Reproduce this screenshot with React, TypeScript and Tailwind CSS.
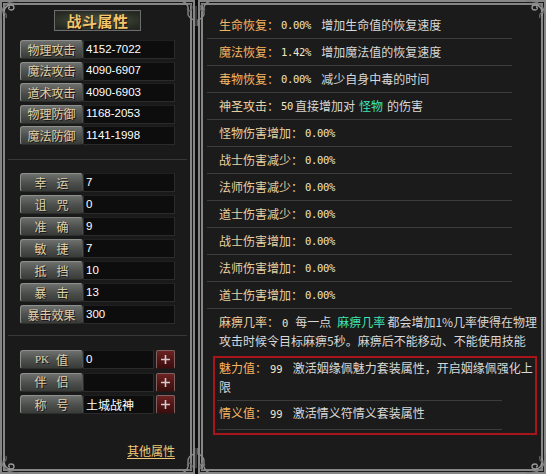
import React from "react";

const CJK = "font-['Noto_Sans_CJK_SC','Noto_Sans',sans-serif]";
const MONO = "font-['DejaVu_Sans_Mono',monospace]";

type Stat = { label: string[]; value: string; plus?: boolean };

const group1: Stat[] = [
  { label: ["物理攻击"], value: "4152-7022" },
  { label: ["魔法攻击"], value: "4090-6907" },
  { label: ["道术攻击"], value: "4090-6903" },
  { label: ["物理防御"], value: "1168-2053" },
  { label: ["魔法防御"], value: "1141-1998" },
];

const group2: Stat[] = [
  { label: ["幸", "运"], value: "7" },
  { label: ["诅", "咒"], value: "0" },
  { label: ["准", "确"], value: "9" },
  { label: ["敏", "捷"], value: "7" },
  { label: ["抵", "挡"], value: "10" },
  { label: ["暴", "击"], value: "13" },
  { label: ["暴击效果"], value: "300" },
];

const group3: Stat[] = [
  { label: ["PK", "值"], value: "0", plus: true },
  { label: ["伴", "侣"], value: "", plus: true },
  { label: ["称", "号"], value: "土城战神", plus: true },
];

type Row = { label: string; value: string; hot?: boolean; desc?: React.ReactNode };

const rows: Row[] = [
  { label: "生命恢复", value: "0.00%", hot: true, desc: "增加生命值的恢复速度" },
  { label: "魔法恢复", value: "1.42%", hot: true, desc: "增加魔法值的恢复速度" },
  { label: "毒物恢复", value: "0.00%", hot: true, desc: "减少自身中毒的时间" },
  {
    label: "神圣攻击",
    value: "50",
    desc: (
      <span className="ml-[-8px]">
        直接增加对<span className="ml-[4px] text-[#3ee6b8]">怪物</span>
        <span className="ml-[4px]">的伤害</span>
      </span>
    ),
  },
  { label: "怪物伤害增加", value: "0.00%" },
  { label: "战士伤害减少", value: "0.00%" },
  { label: "法师伤害减少", value: "0.00%" },
  { label: "道士伤害减少", value: "0.00%" },
  { label: "战士伤害增加", value: "0.00%" },
  { label: "法师伤害增加", value: "0.00%" },
  { label: "道士伤害增加", value: "0.00%" },
];

function Label({ parts }: { parts: string[] }) {
  const gap = parts[0] === "PK" ? "gap-[7px]" : "gap-[10px]";
  return (
    <div
      className={`w-[63px] h-full shrink-0 rounded-[3px] border border-[#8e908e] border-b-[#2c2e2c] border-r-[#4e504e] bg-linear-to-b from-[#6e706e] via-[#4f514f] to-[#393b39] flex items-center justify-center ${gap} text-[12px] leading-none text-[#e0cfa6] [text-shadow:1px_1px_0_#161616]`}
    >
      {parts.map((p) => (
        <span key={p} className={p === "PK" ? "font-['Liberation_Serif',serif] text-[11px]" : ""}>
          {p}
        </span>
      ))}
    </div>
  );
}

function StatRow({ s }: { s: Stat }) {
  const isDigits = /^[0-9-]*$/.test(s.value);
  return (
    <div className="flex h-[19px] items-stretch">
      <Label parts={s.label} />
      <div
        className={`h-full bg-[#0d0d0d] border border-[#2b2b2b] border-t-[#202020] flex items-center pl-[2px] text-white leading-none ${
          s.plus ? "w-[71px]" : "flex-1"
        } ${isDigits ? "font-['Liberation_Sans',sans-serif] text-[11.5px]" : "text-[12px]"}`}
      >
        {s.value}
      </div>
      {s.plus && (
        <div className="ml-[2px] w-[19px] h-full rounded-[2px] border border-[#7e6262] border-b-[#2a1414] bg-linear-to-b from-[#6e2222] via-[#521616] to-[#3a0e0e] flex items-center justify-center">
          <svg width="11" height="11" viewBox="0 0 11 11">
            <path d="M5.5 1v9M1 5.5h9" stroke="#d6caca" strokeWidth="1.6" />
          </svg>
        </div>
      )}
    </div>
  );
}

function Knot({ flip = "" }: { flip?: string }) {
  return (
    <svg width="20" height="20" viewBox="0 0 20 20" fill="none" className={flip}>
      <path d="M1 19 C1 7 5 1 19 1" stroke="#7e7e7e" strokeWidth="1.4" />
      <path d="M4 16 C3 9 6 5 11 5 C15 5 15 10 11 10 C8 10 8 7 10 7" stroke="#9a9a9a" strokeWidth="1.3" />
      <path d="M2 12 C6 12 7 15 6 18" stroke="#6a6a6a" strokeWidth="1.2" />
    </svg>
  );
}

function CenterOrn({ flip = "" }: { flip?: string }) {
  return (
    <svg width="34" height="26" viewBox="0 0 34 26" fill="none" className={flip}>
      <path d="M3 1 C8 3 10 7 9 12 C8 16 12 19 15 20 L15 26" stroke="#8a8a8a" strokeWidth="1.4" />
      <path d="M31 1 C26 3 24 7 25 12 C26 16 22 19 19 20 L19 26" stroke="#8a8a8a" strokeWidth="1.4" />
      <path d="M9 4 C13 4 14 8 12 10 C10 12 7 10 9 8" stroke="#6e6e6e" strokeWidth="1.2" />
      <path d="M25 4 C21 4 20 8 22 10 C24 12 27 10 25 8" stroke="#6e6e6e" strokeWidth="1.2" />
      <path d="M17 6 L17 26" stroke="#5a5a5a" strokeWidth="1.2" />
    </svg>
  );
}

export default function App() {
  return (
    <div className={`relative w-[546px] h-[474px] bg-[#0d0d0d] flex gap-[3px] overflow-hidden ${CJK}`}>
      {/* left panel */}
      <div className="w-[195px] h-full shrink-0 border-[5px] border-double border-[#868686] bg-[#1a1a1a] flex flex-col px-[15px]">
        <div className="mt-[5px] mx-auto w-[87px] h-[21px] border border-[#6c6c6c] p-[1px] bg-[#2a2a2a]">
          <div className="h-full bg-[radial-gradient(ellipse_at_center,#4c5544_0%,#343a2e_55%,#1f221c_100%)] flex items-center justify-center text-[15px] font-bold leading-none tracking-[0.5px] text-[#f3c56c] [text-shadow:1px_1px_0_#1a1208]">
            战斗属性
          </div>
        </div>

        <div className="mt-[9px] flex flex-col gap-[2.5px]">
          {group1.map((s) => (
            <StatRow key={s.label.join("")} s={s} />
          ))}
        </div>

        <div className="mt-[14px] -mx-[12px] h-px bg-[#383838]" />

        <div className="mt-[13px] flex flex-col gap-[3px]">
          {group2.map((s) => (
            <StatRow key={s.label.join("")} s={s} />
          ))}
        </div>

        <div className="mt-[11px] -mx-[12px] h-px bg-[#383838]" />

        <div className="mt-[14px] flex flex-col gap-[3.5px]">
          {group3.map((s) => (
            <StatRow key={s.label.join("")} s={s} />
          ))}
        </div>

        <div className="mt-[29px] self-end text-[12px] leading-[16px] text-[#f0c878] underline underline-offset-2">
          其他属性
        </div>
      </div>

      {/* right panel */}
      <div className="flex-1 h-full border-[5px] border-double border-[#868686] bg-[#1b1b1b] pt-[7px] pr-[4px] text-[12px]">
        <div className="ml-[4px] w-[305px]">
          {rows.map((r) => (
            <div key={r.label}>
              <div className="h-[26px] flex items-center pl-[12px] whitespace-nowrap leading-none">
                <span className={r.hot ? "text-[#f4b462]" : "text-[#e8d0a2]"}>{r.label}：</span>
                <span className={`${MONO} text-[10.5px] tracking-[-0.3px] text-[#efe7c6] ml-[2px]`}>{r.value}</span>
                {r.desc && <span className="ml-[10px] text-[#d8d8d8]">{r.desc}</span>}
              </div>
              <div className="h-px bg-[#3c3c3c]" />
            </div>
          ))}
        </div>

        <div className="ml-[16px] pt-[4px] leading-[18px] text-[#d8d8d8] whitespace-nowrap">
          <div>
            <span className="text-[#e8d0a2]">麻痹几率：</span>
            <span className={`${MONO} text-[10.5px] text-[#efe7c6] ml-[3px]`}>0</span>
            <span className="ml-[7px]">每一点</span>
            <span className="ml-[6px] text-[#3ee6b8]">麻痹几率</span>
            <span className="ml-[2px]">都会增加1%几率使得在物理</span>
          </div>
          <div>攻击时候令目标麻痹5秒。麻痹后不能移动、不能使用技能</div>
        </div>

        <div className="mt-[6px] ml-[10px] h-[79px] border-2 border-[#a8141a] pl-[4px] pt-px leading-[18px] text-[#d8d8d8] whitespace-nowrap">
          <div>
            <span className="text-[#f4b462]">魅力值：</span>
            <span className={`${MONO} text-[10.5px] text-[#efe7c6] ml-[3px]`}>99</span>
            <span className="ml-[10px]">激活姻缘佩魅力套装属性，开启姻缘佩强化上</span>
          </div>
          <div>限</div>
          <div className="mt-[4px] -ml-[2px] w-[285px] h-px bg-[#3c3c3c]" />
          <div className="mt-[3px]">
            <span className="text-[#f4b462]">情义值：</span>
            <span className={`${MONO} text-[10.5px] text-[#efe7c6] ml-[3px]`}>99</span>
            <span className="ml-[10px]">激活情义符情义套装属性</span>
          </div>
          <div className="mt-[6px] -ml-[2px] w-[285px] h-px bg-[#3c3c3c]" />
        </div>
      </div>

      {/* frame ornaments */}
      <div className="absolute left-0 top-0">
        <Knot />
      </div>
      <div className="absolute right-0 top-0">
        <Knot flip="-scale-x-100" />
      </div>
      <div className="absolute left-0 bottom-0">
        <Knot flip="-scale-y-100" />
      </div>
      <div className="absolute right-0 bottom-0">
        <Knot flip="-scale-x-100 -scale-y-100" />
      </div>
      <div className="absolute left-[179px] top-0">
        <CenterOrn />
      </div>
      <div className="absolute left-[179px] bottom-0">
        <CenterOrn flip="-scale-y-100" />
      </div>
    </div>
  );
}
